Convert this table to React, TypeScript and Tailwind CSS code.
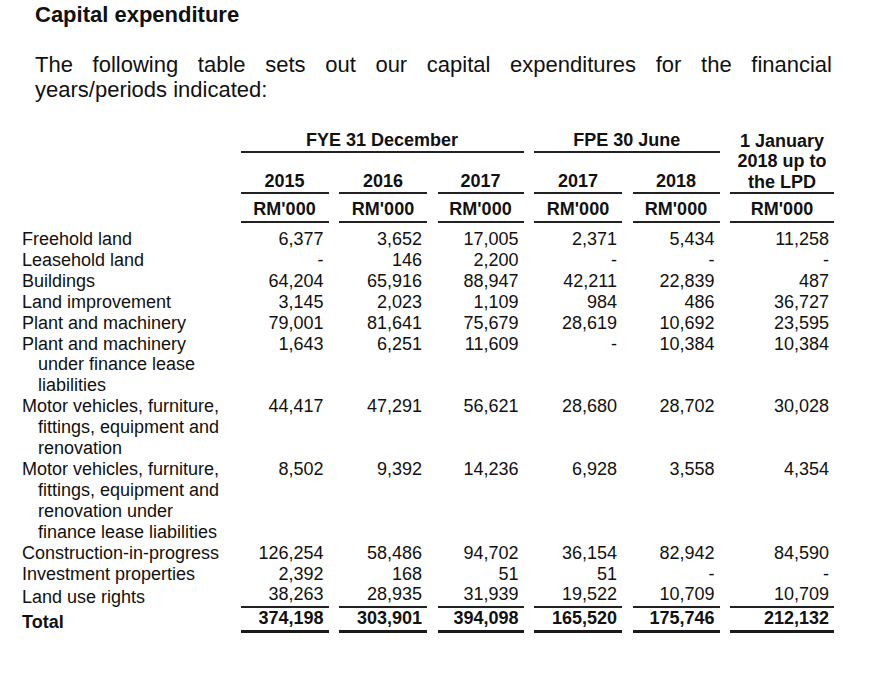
const rows = [
  { label: ['Freehold land'], v: ['6,377', '3,652', '17,005', '2,371', '5,434', '11,258'] },
  { label: ['Leasehold land'], v: ['-', '146', '2,200', '-', '-', '-'] },
  { label: ['Buildings'], v: ['64,204', '65,916', '88,947', '42,211', '22,839', '487'] },
  { label: ['Land improvement'], v: ['3,145', '2,023', '1,109', '984', '486', '36,727'] },
  { label: ['Plant and machinery'], v: ['79,001', '81,641', '75,679', '28,619', '10,692', '23,595'] },
  {
    label: ['Plant and machinery', 'under finance lease', 'liabilities'],
    v: ['1,643', '6,251', '11,609', '-', '10,384', '10,384'],
  },
  {
    label: ['Motor vehicles, furniture,', 'fittings, equipment and', 'renovation'],
    v: ['44,417', '47,291', '56,621', '28,680', '28,702', '30,028'],
  },
  {
    label: ['Motor vehicles, furniture,', 'fittings, equipment and', 'renovation under', 'finance lease liabilities'],
    v: ['8,502', '9,392', '14,236', '6,928', '3,558', '4,354'],
  },
  { label: ['Construction-in-progress'], v: ['126,254', '58,486', '94,702', '36,154', '82,942', '84,590'] },
  { label: ['Investment properties'], v: ['2,392', '168', '51', '51', '-', '-'] },
];

const landUse = ['38,263', '28,935', '31,939', '19,522', '10,709', '10,709'];
const totals = ['374,198', '303,901', '394,098', '165,520', '175,746', '212,132'];

const cols = 'grid grid-cols-[208px_88px_88px_86px_88px_87px_104px] gap-x-[10.5px]';

export default function App() {
  return (
    <div className="w-[887px] h-[679px] bg-white text-[#111] font-['Liberation_Sans',Arial,sans-serif]">
      {/* Heading + intro */}
      <div className="pl-[35px] pt-[2px]">
        <h2 className="text-[22px] leading-[26px] font-bold">Capital expenditure</h2>
        <p className="mt-[24px] w-[797px] text-[22px] leading-[25px]">
          <span className="block text-justify [text-align-last:justify]">
            The following table sets out our capital expenditures for the financial
          </span>
          <span className="block">years/periods indicated:</span>
        </p>
      </div>

      {/* Table */}
      <div className="mt-[28px] pl-[22px] text-[18px] leading-[21px]">
        {/* Header */}
        <div className={`${cols} font-bold`}>
          <div className="row-span-3" />
          <div className="col-span-3 text-center border-b-2 border-[#222]">FYE 31 December</div>
          <div className="col-span-2 text-center border-b-2 border-[#222]">FPE 30 June</div>
          <div className="row-span-2 flex flex-col justify-end text-center leading-[20.5px] border-b-2 border-[#222]">
            <span>1 January</span>
            <span>2018 up to</span>
            <span>the LPD</span>
          </div>

          {['2015', '2016', '2017', '2017', '2018'].map((y, i) => (
            <div key={i} className="pt-[18px] text-center border-b-2 border-[#222]">
              {y}
            </div>
          ))}

          {Array.from({ length: 6 }).map((_, i) => (
            <div key={i} className="pt-[5px] pb-[1px] text-center border-b-2 border-[#222]">
              RM'000
            </div>
          ))}
        </div>

        {/* Body */}
        <div className={`${cols} mt-[6px] leading-[20.9px]`}>
          {rows.map((r) => (
            <Row key={r.label.join(' ')} label={r.label} values={r.v} />
          ))}

          <div className="pt-[3px]">Land use rights</div>
          {landUse.map((n, i) => (
            <div key={i} className="text-right pr-[5px] pb-[1px] border-b-2 border-[#222]">
              {n}
            </div>
          ))}

          <div className="pt-[4px] font-bold">Total</div>
          {totals.map((n, i) => (
            <div key={i} className="text-right pr-[5px] pb-[1px] font-bold border-b-[3px] border-[#1a1a1a]">
              {n}
            </div>
          ))}
        </div>
      </div>
    </div>
  );
}

function Row({ label, values }: { label: string[]; values: string[] }) {
  return (
    <>
      <div className="whitespace-nowrap">
        {label.map((l, i) => (
          <div key={i} className={i > 0 ? 'pl-4' : ''}>
            {l}
          </div>
        ))}
      </div>
      {values.map((n, i) => (
        <div key={i} className="text-right pr-[5px]">
          {n}
        </div>
      ))}
    </>
  );
}
